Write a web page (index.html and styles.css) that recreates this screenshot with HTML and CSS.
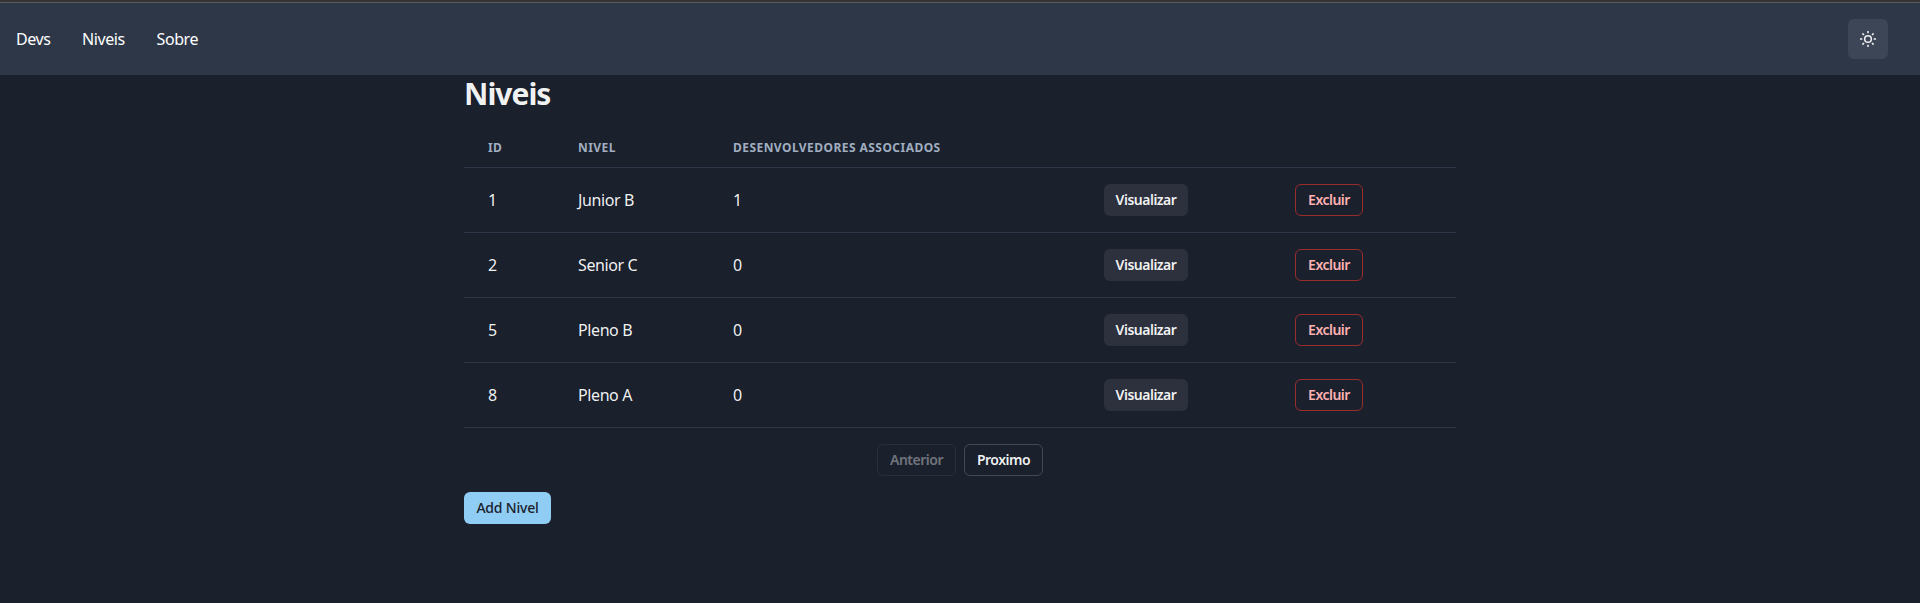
FILE: index.html
```html
<!DOCTYPE html>
<html lang="pt-BR">
<head>
<meta charset="utf-8">
<title>Niveis</title>
<link rel="stylesheet" href="styles.css">
</head>
<body>
<header class="navbar">
  <nav class="nav-links">
    <a class="nav-devs">Devs</a><a class="nav-niveis">Niveis</a><a class="nav-sobre">Sobre</a>
  </nav>
  <button class="theme-toggle" aria-label="Alternar tema">
    <svg viewBox="0 0 24 24" width="16" height="16" fill="none" stroke="currentColor" stroke-width="2.3" stroke-linejoin="round">
      <circle cx="12" cy="12" r="5"/>
      <path d="M12 0v3.5M12 20.5v3.5M3.6 3.6l2.4 2.4M18 18l2.4 2.4M0 12h3.5M20.5 12h3.5M3.6 20.4l2.4-2.4M18 6l2.4-2.4"/>
    </svg>
  </button>
</header>
<main class="container">
  <h2 class="title">Niveis</h2>
  <table class="table">
    <colgroup><col class="col-id"><col class="col-nivel"><col class="col-devs"><col class="col-view"><col class="col-delete"></colgroup>
    <thead>
      <tr><th>ID</th><th>Nivel</th><th>Desenvolvedores associados</th><th></th><th></th></tr>
    </thead>
    <tbody>
      <tr><td>1</td><td>Junior B</td><td>1</td><td><button class="btn view">Visualizar</button></td><td><button class="btn delete">Excluir</button></td></tr>
      <tr><td>2</td><td>Senior C</td><td>0</td><td><button class="btn view">Visualizar</button></td><td><button class="btn delete">Excluir</button></td></tr>
      <tr><td>5</td><td>Pleno B</td><td>0</td><td><button class="btn view">Visualizar</button></td><td><button class="btn delete">Excluir</button></td></tr>
      <tr><td>8</td><td>Pleno A</td><td>0</td><td><button class="btn view">Visualizar</button></td><td><button class="btn delete">Excluir</button></td></tr>
    </tbody>
  </table>
  <div class="pager">
    <button class="btn page prev" disabled>Anterior</button>
    <button class="btn page">Proximo</button>
  </div>
  <button class="btn add">Add Nivel</button>
</main>
</body>
</html>
```
FILE: styles.css
```css
* { box-sizing: border-box; }
body {
  margin: 0;
  min-height: 100vh;
  border-top: 2px solid #333333;
  background: #1a202c;
  color: rgba(255, 255, 255, 0.95);
  font: 16px/24px "Noto Sans", "Open Sans", sans-serif;
}
button { font-family: inherit; }
.navbar {
  display: flex;
  align-items: center;
  justify-content: space-between;
  height: 73px;
  padding: 0 32px 0 16px;
  border-top: 1px solid #5b5b5b;
  background: #2d3748;
}
.nav-links { display: flex; gap: 32px; color: #fff; letter-spacing: -0.4px; }
.nav-devs { width: 34px; }
.nav-niveis { width: 42.5px; }
.theme-toggle {
  display: flex;
  align-items: center;
  justify-content: center;
  width: 40px;
  height: 40px;
  padding: 0;
  border: 0;
  border-radius: 6px;
  background: rgba(255, 255, 255, 0.08);
  color: rgba(255, 255, 255, 0.92);
}
.container { width: 992px; margin: 0 auto; }
.title { height: 36px; margin: 0 0 16px; padding-top: 1px; font-size: 30px; line-height: 36px; font-weight: 700; letter-spacing: -1px; }
.table { width: 100%; table-layout: fixed; border-collapse: separate; border-spacing: 0; }
.col-id { width: 90px; }
.col-nivel { width: 155px; }
.col-devs { width: 371px; }
.col-view { width: 191px; }
.col-delete { width: 185px; }
th {
  height: 41px;
  padding: 13px 24px 11px;
  border-bottom: 1px solid #2d3748;
  color: #a0aec0;
  font-size: 12px;
  line-height: 16px;
  font-weight: 700;
  letter-spacing: 0.45px;
  text-align: left;
  text-transform: uppercase;
  white-space: nowrap;
}
td { height: 65px; padding: 16px 24px; border-bottom: 1px solid #2d3748; letter-spacing: -0.4px; }
.btn {
  display: flex;
  align-items: center;
  justify-content: center;
  height: 32px;
  padding: 0;
  border: 0;
  border-radius: 6px;
  background: transparent;
  color: rgba(255, 255, 255, 0.95);
  font-size: 14px;
  line-height: 16px;
  font-weight: 600;
  letter-spacing: -0.5px;
}
.view { width: 84px; background: #2c313d; }
.delete { width: 68px; border: 1px solid #9b2c2c; color: #feb2b2; }
.pager { display: flex; justify-content: center; gap: 8px; margin: 16px 0; }
.page { width: 79px; border: 1px solid rgba(255, 255, 255, 0.18); }
.prev { opacity: 0.4; }
.add { width: 87px; background: #90cdf4; color: #1a202c; font-weight: 500; letter-spacing: -0.2px; }
```
